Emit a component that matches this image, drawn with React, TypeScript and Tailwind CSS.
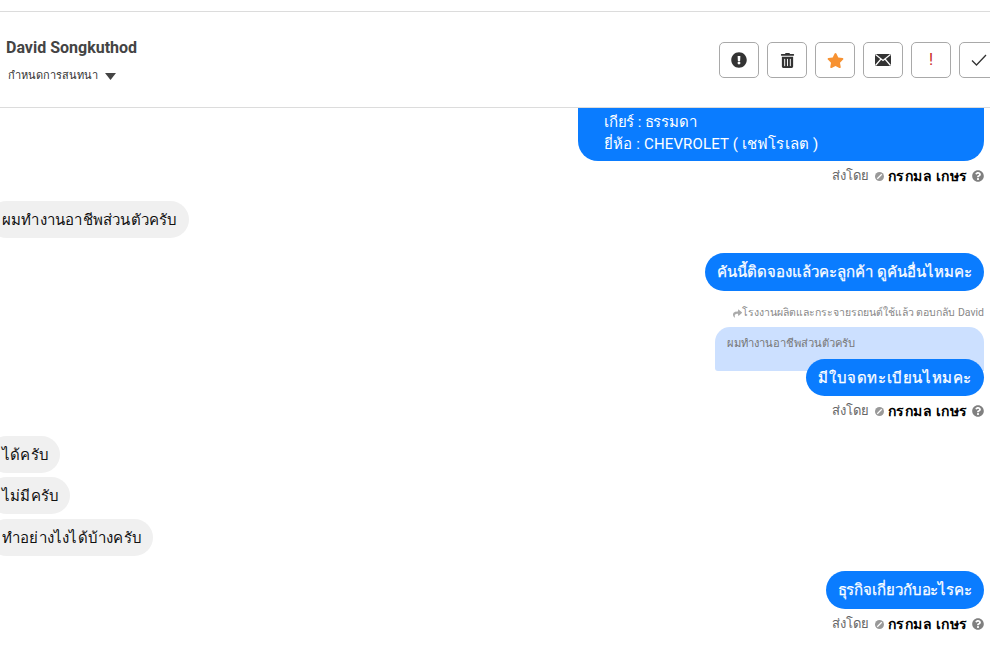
import { FaExclamationCircle, FaTrashAlt, FaStar, FaQuestionCircle, FaShare } from "react-icons/fa";

const thai = "font-['Roboto','Noto_Sans','DejaVu_Sans',sans-serif]";

function HeaderButton({ children }: { children: React.ReactNode }) {
  return (
    <button className="w-10 h-9 shrink-0 flex items-center justify-center bg-white border border-[#a9a9a9] rounded-[5px]">
      {children}
    </button>
  );
}

function SentBy() {
  return (
    <div className="flex items-center justify-end h-5 text-[14px] leading-5">
      <span className="text-[13px] tracking-[0.1px] text-[#666]">ส่งโดย</span>
      <svg className="ml-[5px]" width="9" height="9" viewBox="0 0 10 10">
        <circle cx="5" cy="5" r="5" fill="#999" />
        <path d="M2.5 7.5 7.5 2.5" stroke="#fff" strokeWidth="1.4" />
      </svg>
      <span className="ml-1 font-bold text-black tracking-[0.5px]">กรกมล เกษร</span>
      <FaQuestionCircle className="ml-1 text-[#808080] text-[12px]" />
    </div>
  );
}

function Sent({ children, className, textClass }: { children: React.ReactNode; className?: string; textClass?: string }) {
  return (
    <div className={`flex justify-end ${className ?? ""}`}>
      <div className={`relative bg-[#0a7cff] text-white text-[15px] [-webkit-text-stroke:0.25px_white] leading-[22px] px-3 py-2 rounded-[19px] ${textClass ?? "h-[38px]"}`}>
        {children}
      </div>
    </div>
  );
}

function Received({ children, className }: { children: React.ReactNode; className?: string }) {
  return (
    <div className={`flex ${className ?? ""}`}>
      <div className="-ml-3 bg-[#f0f0f0] text-[#111] text-[15px] tracking-[0.2px] leading-[21px] h-[37px] pl-[14px] pr-[11px] pt-[9px] rounded-[19px]">
        {children}
      </div>
    </div>
  );
}

export default function App() {
  return (
    <div className={`w-[990px] h-[648px] overflow-hidden bg-white flex flex-col ${thai}`}>
      <div className="h-[11px] shrink-0" />
      <header className="h-[97px] shrink-0 border-y border-[#dcdcdc] flex items-center justify-between pl-[6px]">
        <div className="flex flex-col pt-[1px]">
          <h1 className="text-[16px] leading-5 font-bold text-[#444]">David Songkuthod</h1>
          <div className="mt-[12px] flex items-center gap-[7px] text-[11px] leading-[18px] h-[13px] overflow-hidden text-[#333] pl-[2px]">
            <span>กำหนดการสนทนา</span>
            <svg width="11" height="7" viewBox="0 0 11 7">
              <path d="M0 0H11L5.5 7Z" fill="#444" />
            </svg>
          </div>
        </div>
        <div className="flex gap-2 -mr-[9px] pt-[1px]">
          <HeaderButton><FaExclamationCircle className="text-[#333] text-[16px]" /></HeaderButton>
          <HeaderButton><FaTrashAlt className="text-[#333] text-[15px]" /></HeaderButton>
          <HeaderButton><FaStar className="text-[#f79232] text-[17px]" /></HeaderButton>
          <HeaderButton>
            <svg width="16" height="12" viewBox="0 0 16 12">
              <rect width="16" height="12" rx="1" fill="#333" />
              <path d="M0.5 0.5 8 6.5 15.5 0.5M0.5 11.5 6 5M15.5 11.5 10 5" fill="none" stroke="#fff" strokeWidth="1.2" />
            </svg>
          </HeaderButton>
          <HeaderButton><span className="text-[#c9281e] text-[16px] leading-none">!</span></HeaderButton>
          <HeaderButton>
            <svg width="16" height="12" viewBox="0 0 16 12">
              <path d="M1 6.5 5.5 11 15 1" fill="none" stroke="#333" strokeWidth="1.3" />
            </svg>
          </HeaderButton>
        </div>
      </header>

      <main className="flex-1 overflow-hidden pr-[6px]">
        <div className="flex justify-end">
          <div className="w-[406px] h-[53px] bg-[#0a7cff] text-white text-[15px] leading-[22px] pl-[26px] pt-[3px] rounded-b-[20px]">
            <div className="tracking-[-0.2px]">เกียร์ : ธรรมดา</div>
            <div className="tracking-[0.15px]">ยี่ห้อ : CHEVROLET ( เชฟโรเลต )</div>
          </div>
        </div>
        <div className="mt-[5px]"><SentBy /></div>

        <Received className="mt-[15px]">ผมทำงานอาชีพส่วนตัวครับ</Received>

        <Sent className="mt-[15px]">คันนี้ติดจองแล้วคะลูกค้า ดูคันอื่นไหมคะ</Sent>

        <div className="mt-[14px] flex justify-end items-center h-[16px] text-[10.5px] text-[#888]">
          <FaShare className="text-[9px] text-[#aaa]" />
          <span>โรงงานผลิตและกระจายรถยนต์ใช้แล้ว ตอบกลับ David</span>
        </div>
        <div className="mt-[6px] flex justify-end">
          <div className="w-[269px] h-[44px] bg-[#cce0ff] rounded-t-[15px] rounded-bl-[3px] text-[11.2px] leading-4 text-[#777] pl-3 pt-[9px]">
            ผมทำงานอาชีพส่วนตัวครับ
          </div>
        </div>
        <Sent className="-mt-[12px]" textClass="h-[37px] tracking-[0.6px]">มีใบจดทะเบียนไหมคะ</Sent>
        <div className="mt-[5px]"><SentBy /></div>

        <Received className="mt-[15px]">ได้ครับ</Received>
        <Received className="mt-[4px]">ไม่มีครับ</Received>
        <Received className="mt-[5px]">ทำอย่างไงได้บ้างครับ</Received>

        <Sent className="mt-[15px]" textClass="h-[38px] tracking-[-0.1px]">ธุรกิจเกี่ยวกับอะไรคะ</Sent>
        <div className="mt-[5px]"><SentBy /></div>
      </main>
    </div>
  );
}
